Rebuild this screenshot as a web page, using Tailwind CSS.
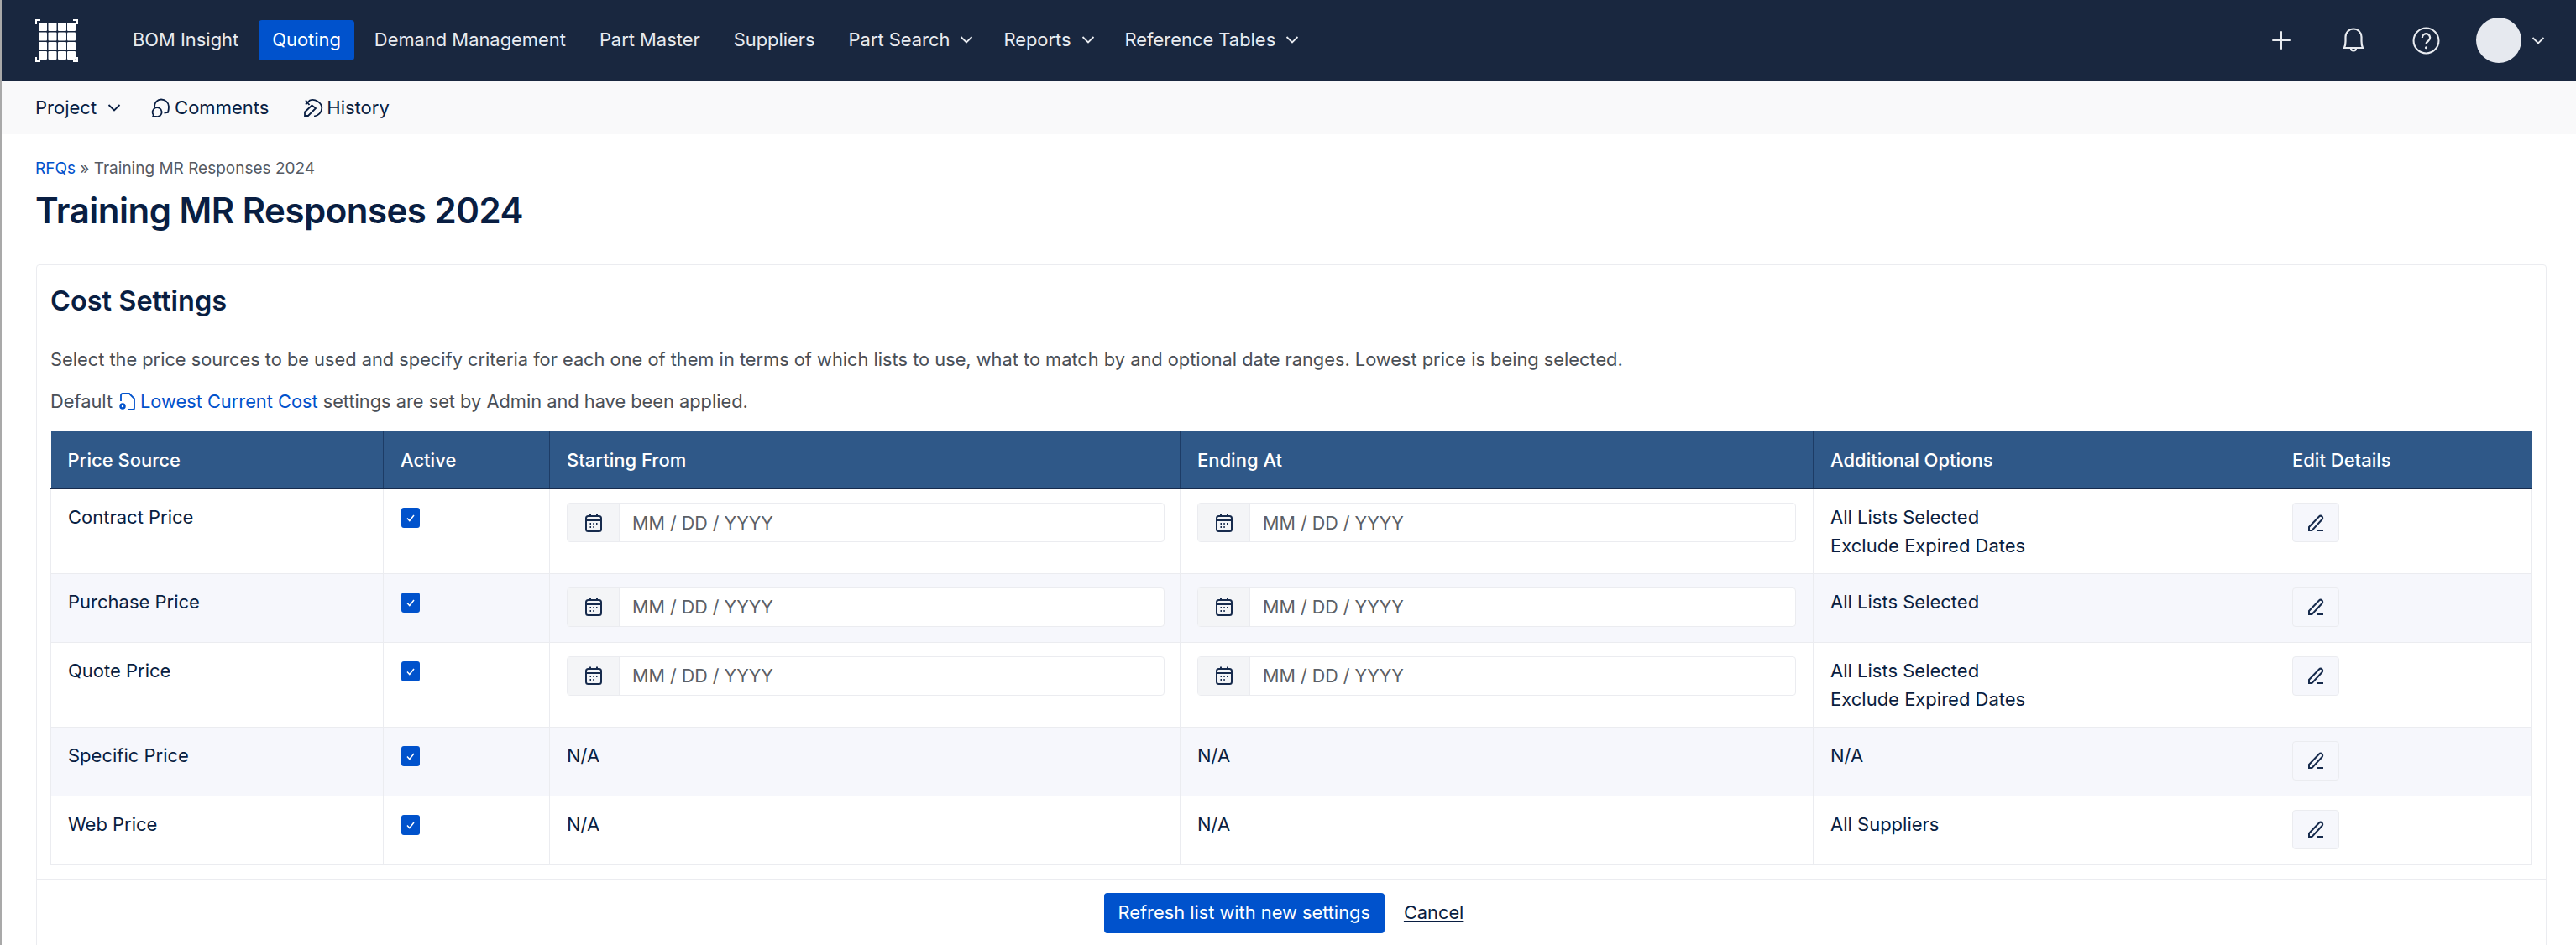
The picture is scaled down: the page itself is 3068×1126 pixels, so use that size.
<!DOCTYPE html>
<html lang="en">
<head>
  <meta charset="UTF-8" />
  <title>Training MR Responses 2024</title>
  <script src="https://cdn.jsdelivr.net/npm/@tailwindcss/browser@4"></script>
</head>
<body class="h-[1126px] overflow-hidden bg-white font-['Inter',sans-serif] text-[#091e42]">
<div class="h-full border-l-2 border-[#a9a9a9]">
  <header class="flex h-24 items-center bg-[#19273f] pl-10 pr-[37px] text-[#e8ebf0]">
    <svg class="h-[51px] w-[51px]" viewBox="0 0 51 51" fill="none">
      <path d="M1 6V1h5M45 1h5v5M1 45v5h5M50 45v5h-5" stroke="#fff" stroke-width="2"/>
      <g fill="#fff">
        <rect x="4" y="4" width="10" height="10" rx="1"/><rect x="15.500" y="4" width="10" height="10" rx="1"/><rect x="27" y="4" width="10" height="10" rx="1"/><rect x="38" y="4" width="10" height="10" rx="1"/>
        <rect x="4" y="15.500" width="10" height="10" rx="1"/><rect x="15.500" y="15.500" width="10" height="10" rx="1"/><rect x="27" y="15.500" width="10" height="10" rx="1"/><rect x="38" y="15.500" width="10" height="10" rx="1"/>
        <rect x="4" y="27" width="10" height="10" rx="1"/><rect x="15.500" y="27" width="10" height="10" rx="1"/><rect x="27" y="27" width="10" height="10" rx="1"/><rect x="38" y="27" width="10" height="10" rx="1"/>
        <rect x="4" y="38" width="10" height="10" rx="1"/><rect x="15.500" y="38" width="10" height="10" rx="1"/><rect x="27" y="38" width="10" height="10" rx="1"/><rect x="38" y="38" width="10" height="10" rx="1"/>
      </g>
    </svg>
    <nav class="ml-[49px] flex items-center gap-2 text-[21.9px]">
      <a class="flex h-12 items-center rounded px-4 pb-[2px]">BOM Insight</a>
      <a class="flex h-12 items-center rounded bg-[#0052cc] px-4 pb-[2px] text-white">Quoting</a>
      <a class="flex h-12 items-center rounded px-4 pb-[2px]">Demand Management</a>
      <a class="flex h-12 items-center rounded px-4 pb-[2px]">Part Master</a>
      <a class="flex h-12 items-center rounded px-4 pb-[2px]">Suppliers</a>
      <a class="flex h-12 items-center gap-3 rounded pl-4 pr-3 pb-[2px]">Part Search
        <svg class="h-4 w-4" viewBox="0 0 16 16" fill="none" stroke="currentColor" stroke-width="1.800"><path d="M1.500 5 8 11.500 14.500 5"/></svg>
      </a>
      <a class="flex h-12 items-center gap-3 rounded pl-4 pr-3 pb-[2px]">Reports
        <svg class="h-4 w-4" viewBox="0 0 16 16" fill="none" stroke="currentColor" stroke-width="1.800"><path d="M1.500 5 8 11.500 14.500 5"/></svg>
      </a>
      <a class="flex h-12 items-center gap-3 rounded pl-4 pr-3 pb-[2px]">Reference Tables
        <svg class="h-4 w-4" viewBox="0 0 16 16" fill="none" stroke="currentColor" stroke-width="1.800"><path d="M1.500 5 8 11.500 14.500 5"/></svg>
      </a>
    </nav>
    <div class="ml-auto flex items-center">
      <svg class="h-[22px] w-[22px]" viewBox="0 0 22 22" fill="none" stroke="currentColor" stroke-width="2" stroke-linecap="round"><path d="M11 1v20M1 11h20"/></svg>
      <svg class="ml-[62px] h-[32px] w-[26px]" viewBox="0 0 26 32" fill="none" stroke="currentColor" stroke-width="2.200"><path d="M2 25c1-2 1.500-4 1.500-8v-5a9.500 9.500 0 0 1 19 0v5c0 4 .500 6 1.500 8zM10 25.500a3 3 0 0 0 6 0"/></svg>
      <svg class="ml-[57px] h-[33px] w-[33px]" viewBox="0 0 32 32" fill="none" stroke="currentColor" stroke-width="2"><circle cx="16" cy="16" r="14.500"/><path d="M11.500 12.500a4.500 4.500 0 1 1 7 3.700c-1.500 1-2.500 1.800-2.500 3.600" stroke-width="2.200"/><circle cx="16" cy="24" r="1.500" fill="currentColor" stroke="none"/></svg>
      <div class="ml-[43px] h-[54px] w-[54px] rounded-full bg-[#e6e9ef]"></div>
      <svg class="ml-[12px] h-4 w-4" viewBox="0 0 16 16" fill="none" stroke="currentColor" stroke-width="1.800"><path d="M1.500 5 8 11.500 14.500 5"/></svg>
    </div>
  </header>

  <div class="flex h-16 items-center bg-[#f9f9fa] pl-10 text-[22px]">
    <a class="flex items-center gap-[13px]">Project
      <svg class="h-4 w-4" viewBox="0 0 16 16" fill="none" stroke="currentColor" stroke-width="1.800"><path d="M1.500 5 8 11.500 14.500 5"/></svg>
    </a>
    <a class="ml-[35px] flex items-center gap-[5px]">
      <svg class="h-6 w-6" viewBox="0 0 24 24" fill="none" stroke="currentColor" stroke-width="1.800"><path d="M5 11C5 6 8.500 2.500 13 2.500S22 6 22 11c0 2.500-.300 4.500-1 7l-4.500 .500"/><path d="M3 23l.800-2A5.500 5.500 0 1 1 7 23z"/></svg>
      Comments
    </a>
    <a class="ml-[41px] flex items-center gap-[4px]">
      <svg class="h-6 w-6" viewBox="0 0 24 24" fill="none" stroke="currentColor" stroke-width="1.800"><path d="M3 3.500 7.500 9M3 8.500 8 3.500c6-2 14 2 14.300 9.200C22.300 18 18 22 13 22.700"/><path d="M2 22v-4.500L10.500 9.500l4.500 3.500L6 22z"/></svg>
      History
    </a>
  </div>

  <main class="pl-10 pr-[35px] pt-[31px]">
    <p class="text-[19px] leading-[20px] text-[#555a63]"><a class="text-[#0052cc]">RFQs</a> » Training MR Responses 2024</p>
    <h1 class="mt-3 text-[42px] font-semibold leading-[56px] tracking-[-0.5px]">Training MR Responses 2024</h1>

    <section class="ml-[1px] mt-[36px] rounded-t border border-[#ebecf0]">
      <div class="px-4">
        <h2 class="pt-[21px] text-[32.5px] font-semibold leading-[44px]">Cost Settings</h2>
        <p class="mt-[33px] text-[21.8px] leading-[28px] text-[#4a4f57]">Select the price sources to be used and specify criteria for each one of them in terms of which lists to use, what to match by and optional date ranges. Lowest price is being selected.</p>
        <p class="mt-[22px] flex items-center text-[21.8px] leading-[28px] text-[#4a4f57]">Default
          <a class="ml-[7px] mr-[6px] flex items-center gap-[4px] text-[#0052cc]">
            <svg class="h-[24px] w-[22px]" viewBox="0 0 22 24" fill="none" stroke="currentColor" stroke-width="1.800"><path d="M3 12V5a2 2 0 0 1 2-2h8l6 6v11a2 2 0 0 1-2 2h-5"/><circle cx="5" cy="18" r="2.500" stroke-width="2.500"/></svg>
            Lowest Current Cost</a>
          settings are set by Admin and have been applied.</p>
        <table class="mt-[22px] w-full table-fixed border-collapse text-[22px] leading-[34px]">
          <colgroup>
            <col class="w-[396px]" /><col class="w-[198px]" /><col class="w-[751px]" /><col class="w-[754px]" /><col class="w-[550px]" /><col />
          </colgroup>
          <thead>
            <tr class="h-[68px] border-b-2 border-[#172b4d] bg-[#2f5888] text-left text-white">
              <th class="px-5 font-medium">Price Source</th>
              <th class="border-l border-[#1d3c66] px-5 font-medium">Active</th>
              <th class="border-l border-[#1d3c66] px-5 font-medium">Starting From</th>
              <th class="border-l border-[#1d3c66] px-5 font-medium">Ending At</th>
              <th class="border-l border-[#1d3c66] px-5 font-medium">Additional Options</th>
              <th class="border-l border-[#1d3c66] px-5 font-medium">Edit Details</th>
            </tr>
          </thead>
          <tbody>
            <tr class="h-[101px] border-b border-[#ebecf0] align-top">
              <td class="border-l border-[#ebecf0] px-5 pt-4">Contract Price</td>
              <td class="border-l border-[#ebecf0] px-5 pt-[22px]">
                <span class="ml-[1px] flex h-6 w-[22px] items-center justify-center rounded-[3px] bg-[#0052cc]"><svg class="h-3 w-3" viewBox="0 0 12 12" fill="none" stroke="#fff" stroke-width="1.500"><path d="M2 6.500 4.800 9.500 10 3"/></svg></span>
              </td>
              <td class="border-l border-[#ebecf0] pl-5 pr-[18px] pt-4">
                <div class="flex h-[47px] rounded border border-[#ebecf0] text-[21.5px] text-[#5c5f66]">
                  <span class="flex w-[62px] items-center justify-center border-r border-[#ebecf0] bg-[#f4f5f7]"><svg class="h-6 w-6" viewBox="0 0 24 24" fill="none" stroke="#172b4d" stroke-width="2"><rect x="3" y="4" width="18" height="18" rx="2.500"/><path d="M3 9h18M8 1.500V5M16 1.500V5"/><path d="M7.500 13h1.500M11.300 13h1.500M15 13h1.500M7.500 17h1.500M11.300 17h1.500"/></svg></span>
                  <span class="flex items-center pl-[15px]">MM / DD / YYYY</span>
                </div>
              </td>
              <td class="border-l border-[#ebecf0] px-5 pt-4">
                <div class="flex h-[47px] rounded border border-[#ebecf0] text-[21.5px] text-[#5c5f66]">
                  <span class="flex w-[62px] items-center justify-center border-r border-[#ebecf0] bg-[#f4f5f7]"><svg class="h-6 w-6" viewBox="0 0 24 24" fill="none" stroke="#172b4d" stroke-width="2"><rect x="3" y="4" width="18" height="18" rx="2.500"/><path d="M3 9h18M8 1.500V5M16 1.500V5"/><path d="M7.500 13h1.500M11.300 13h1.500M15 13h1.500M7.500 17h1.500M11.300 17h1.500"/></svg></span>
                  <span class="flex items-center pl-[15px]">MM / DD / YYYY</span>
                </div>
              </td>
              <td class="border-l border-[#ebecf0] px-5 pt-4">All Lists Selected<br />Exclude Expired Dates</td>
              <td class="border-x border-[#ebecf0] px-5 pt-4">
                <button class="flex h-[47px] w-[56px] items-center justify-center rounded border border-[#ebecf0] bg-[#f6f7fc]"><svg class="h-6 w-6" viewBox="0 0 24 24" fill="none" stroke="#172b4d" stroke-width="2"><path d="M4 21v-4L16 4.500a2.200 2.200 0 0 1 3.500 3.500L7.500 21zM13 21h8"/></svg></button>
              </td>
            </tr>
            <tr class="h-[82px] border-b border-[#ebecf0] bg-[#f6f7fc] align-top">
              <td class="border-l border-[#ebecf0] px-5 pt-4">Purchase Price</td>
              <td class="border-l border-[#ebecf0] px-5 pt-[22px]">
                <span class="ml-[1px] flex h-6 w-[22px] items-center justify-center rounded-[3px] bg-[#0052cc]"><svg class="h-3 w-3" viewBox="0 0 12 12" fill="none" stroke="#fff" stroke-width="1.500"><path d="M2 6.500 4.800 9.500 10 3"/></svg></span>
              </td>
              <td class="border-l border-[#ebecf0] pl-5 pr-[18px] pt-4">
                <div class="flex h-[47px] rounded border border-[#ebecf0] bg-white text-[21.5px] text-[#5c5f66]">
                  <span class="flex w-[62px] items-center justify-center border-r border-[#ebecf0] bg-[#f4f5f7]"><svg class="h-6 w-6" viewBox="0 0 24 24" fill="none" stroke="#172b4d" stroke-width="2"><rect x="3" y="4" width="18" height="18" rx="2.500"/><path d="M3 9h18M8 1.500V5M16 1.500V5"/><path d="M7.500 13h1.500M11.300 13h1.500M15 13h1.500M7.500 17h1.500M11.300 17h1.500"/></svg></span>
                  <span class="flex items-center pl-[15px]">MM / DD / YYYY</span>
                </div>
              </td>
              <td class="border-l border-[#ebecf0] px-5 pt-4">
                <div class="flex h-[47px] rounded border border-[#ebecf0] bg-white text-[21.5px] text-[#5c5f66]">
                  <span class="flex w-[62px] items-center justify-center border-r border-[#ebecf0] bg-[#f4f5f7]"><svg class="h-6 w-6" viewBox="0 0 24 24" fill="none" stroke="#172b4d" stroke-width="2"><rect x="3" y="4" width="18" height="18" rx="2.500"/><path d="M3 9h18M8 1.500V5M16 1.500V5"/><path d="M7.500 13h1.500M11.300 13h1.500M15 13h1.500M7.500 17h1.500M11.300 17h1.500"/></svg></span>
                  <span class="flex items-center pl-[15px]">MM / DD / YYYY</span>
                </div>
              </td>
              <td class="border-l border-[#ebecf0] px-5 pt-4">All Lists Selected</td>
              <td class="border-x border-[#ebecf0] px-5 pt-4">
                <button class="flex h-[47px] w-[56px] items-center justify-center rounded border border-[#ebecf0] bg-[#f6f7fc]"><svg class="h-6 w-6" viewBox="0 0 24 24" fill="none" stroke="#172b4d" stroke-width="2"><path d="M4 21v-4L16 4.500a2.200 2.200 0 0 1 3.500 3.500L7.500 21zM13 21h8"/></svg></button>
              </td>
            </tr>
            <tr class="h-[101px] border-b border-[#ebecf0] align-top">
              <td class="border-l border-[#ebecf0] px-5 pt-4">Quote Price</td>
              <td class="border-l border-[#ebecf0] px-5 pt-[22px]">
                <span class="ml-[1px] flex h-6 w-[22px] items-center justify-center rounded-[3px] bg-[#0052cc]"><svg class="h-3 w-3" viewBox="0 0 12 12" fill="none" stroke="#fff" stroke-width="1.500"><path d="M2 6.500 4.800 9.500 10 3"/></svg></span>
              </td>
              <td class="border-l border-[#ebecf0] pl-5 pr-[18px] pt-4">
                <div class="flex h-[47px] rounded border border-[#ebecf0] text-[21.5px] text-[#5c5f66]">
                  <span class="flex w-[62px] items-center justify-center border-r border-[#ebecf0] bg-[#f4f5f7]"><svg class="h-6 w-6" viewBox="0 0 24 24" fill="none" stroke="#172b4d" stroke-width="2"><rect x="3" y="4" width="18" height="18" rx="2.500"/><path d="M3 9h18M8 1.500V5M16 1.500V5"/><path d="M7.500 13h1.500M11.300 13h1.500M15 13h1.500M7.500 17h1.500M11.300 17h1.500"/></svg></span>
                  <span class="flex items-center pl-[15px]">MM / DD / YYYY</span>
                </div>
              </td>
              <td class="border-l border-[#ebecf0] px-5 pt-4">
                <div class="flex h-[47px] rounded border border-[#ebecf0] text-[21.5px] text-[#5c5f66]">
                  <span class="flex w-[62px] items-center justify-center border-r border-[#ebecf0] bg-[#f4f5f7]"><svg class="h-6 w-6" viewBox="0 0 24 24" fill="none" stroke="#172b4d" stroke-width="2"><rect x="3" y="4" width="18" height="18" rx="2.500"/><path d="M3 9h18M8 1.500V5M16 1.500V5"/><path d="M7.500 13h1.500M11.300 13h1.500M15 13h1.500M7.500 17h1.500M11.300 17h1.500"/></svg></span>
                  <span class="flex items-center pl-[15px]">MM / DD / YYYY</span>
                </div>
              </td>
              <td class="border-l border-[#ebecf0] px-5 pt-4">All Lists Selected<br />Exclude Expired Dates</td>
              <td class="border-x border-[#ebecf0] px-5 pt-4">
                <button class="flex h-[47px] w-[56px] items-center justify-center rounded border border-[#ebecf0] bg-[#f6f7fc]"><svg class="h-6 w-6" viewBox="0 0 24 24" fill="none" stroke="#172b4d" stroke-width="2"><path d="M4 21v-4L16 4.500a2.200 2.200 0 0 1 3.500 3.500L7.500 21zM13 21h8"/></svg></button>
              </td>
            </tr>
            <tr class="h-[82px] border-b border-[#ebecf0] bg-[#f6f7fc] align-top">
              <td class="border-l border-[#ebecf0] px-5 pt-4">Specific Price</td>
              <td class="border-l border-[#ebecf0] px-5 pt-[22px]">
                <span class="ml-[1px] flex h-6 w-[22px] items-center justify-center rounded-[3px] bg-[#0052cc]"><svg class="h-3 w-3" viewBox="0 0 12 12" fill="none" stroke="#fff" stroke-width="1.500"><path d="M2 6.500 4.800 9.500 10 3"/></svg></span>
              </td>
              <td class="border-l border-[#ebecf0] px-5 pt-4">N/A</td>
              <td class="border-l border-[#ebecf0] px-5 pt-4">N/A</td>
              <td class="border-l border-[#ebecf0] px-5 pt-4">N/A</td>
              <td class="border-x border-[#ebecf0] px-5 pt-4">
                <button class="flex h-[47px] w-[56px] items-center justify-center rounded border border-[#ebecf0] bg-[#f6f7fc]"><svg class="h-6 w-6" viewBox="0 0 24 24" fill="none" stroke="#172b4d" stroke-width="2"><path d="M4 21v-4L16 4.500a2.200 2.200 0 0 1 3.500 3.500L7.500 21zM13 21h8"/></svg></button>
              </td>
            </tr>
            <tr class="h-[82px] border-b border-[#ebecf0] align-top">
              <td class="border-l border-[#ebecf0] px-5 pt-4">Web Price</td>
              <td class="border-l border-[#ebecf0] px-5 pt-[22px]">
                <span class="ml-[1px] flex h-6 w-[22px] items-center justify-center rounded-[3px] bg-[#0052cc]"><svg class="h-3 w-3" viewBox="0 0 12 12" fill="none" stroke="#fff" stroke-width="1.500"><path d="M2 6.500 4.800 9.500 10 3"/></svg></span>
              </td>
              <td class="border-l border-[#ebecf0] px-5 pt-4">N/A</td>
              <td class="border-l border-[#ebecf0] px-5 pt-4">N/A</td>
              <td class="border-l border-[#ebecf0] px-5 pt-4">All Suppliers</td>
              <td class="border-x border-[#ebecf0] px-5 pt-4">
                <button class="flex h-[47px] w-[56px] items-center justify-center rounded border border-[#ebecf0] bg-[#f6f7fc]"><svg class="h-6 w-6" viewBox="0 0 24 24" fill="none" stroke="#172b4d" stroke-width="2"><path d="M4 21v-4L16 4.500a2.200 2.200 0 0 1 3.500 3.500L7.500 21zM13 21h8"/></svg></button>
              </td>
            </tr>
          </tbody>
        </table>
      </div>
      <div class="mt-4 flex items-center justify-center gap-[23px] border-t border-[#ebecf0] pb-[30px] pr-[18px] pt-4 text-[21.8px]">
        <button class="h-12 rounded bg-[#0052cc] px-[17px] text-white">Refresh list with new settings</button>
        <a class="underline underline-offset-2">Cancel</a>
      </div>
    </section>
  </main>
</div>
</body>
</html>
